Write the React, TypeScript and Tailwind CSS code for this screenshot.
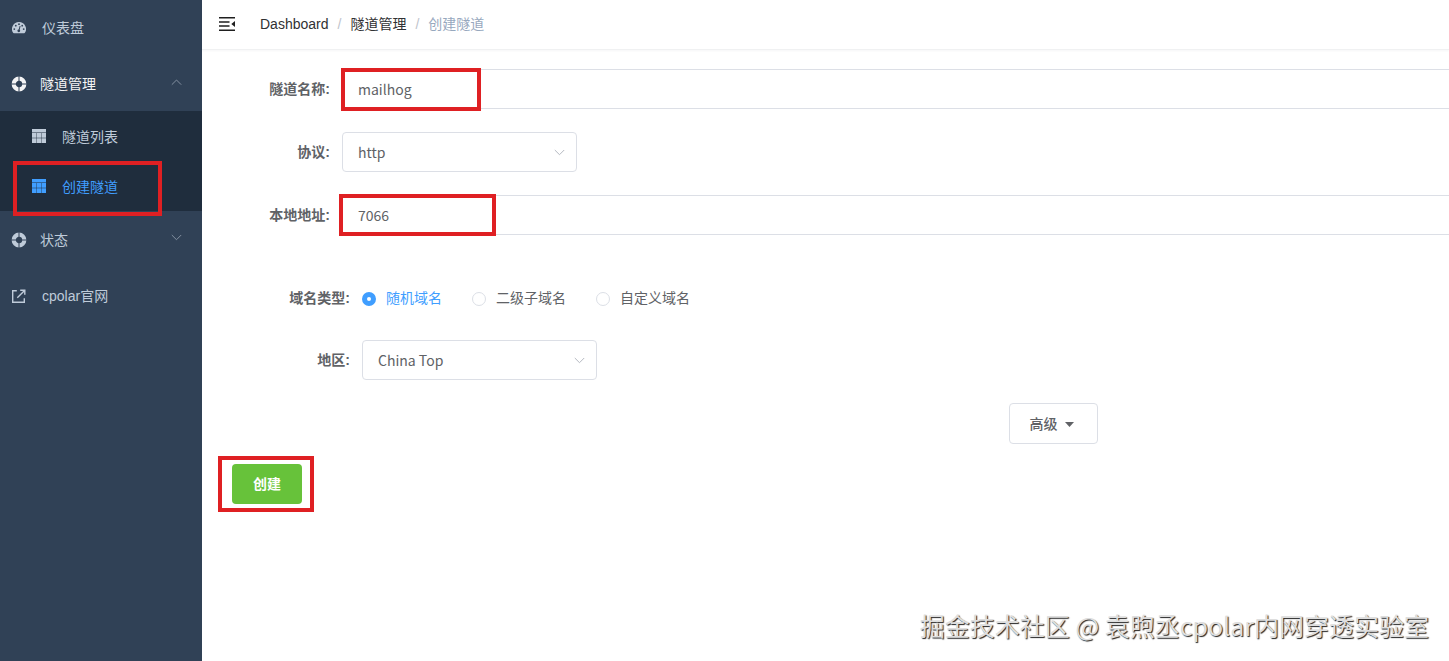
import { useState } from "react";
import type { ReactNode } from "react";

// ===============================
// ICONS
// ===============================
function GaugeIcon() {
  return (
    <svg width="14" height="12" viewBox="0 0 14 12">
      <path d="M7 0a7 7 0 0 0-5.9 10.8c.2.3.4.4.7.4h10.4c.3 0 .5-.1.7-.4A7 7 0 0 0 7 0z" fill="#bfcbd9" />
      <g fill="#304156">
        <circle cx="2.3" cy="7.1" r="0.9" />
        <circle cx="3.8" cy="3.7" r="0.9" />
        <circle cx="7" cy="2.2" r="0.9" />
        <circle cx="10.2" cy="3.7" r="0.9" />
        <circle cx="11.7" cy="7.1" r="0.9" />
        <circle cx="6.8" cy="8.8" r="1.4" />
      </g>
      <path d="M6.9 8.6 8 4.4" stroke="#304156" strokeWidth="1" strokeLinecap="round" />
    </svg>
  );
}

function HelpIcon() {
  return (
    <svg width="16" height="16" viewBox="0 0 16 16" fill="none">
      <circle cx="8" cy="8" r="5.3" stroke="currentColor" strokeWidth="4.2" />
      <path d="M8 0v5M8 11v5M0 8h5M11 8h5" stroke="#304156" strokeWidth="1" />
    </svg>
  );
}

function TableIcon() {
  return (
    <svg width="14" height="14" viewBox="0 0 14 14" fill="currentColor">
      <path d="M0 0h14v3.6H0zM0 4.1h4.4v4.7H0zM4.8 4.1h4.4v4.7H4.8zM9.6 4.1H14v4.7H9.6zM0 9.2h4.4V14H0zM4.8 9.2h4.4V14H4.8zM9.6 9.2H14V14H9.6z" />
    </svg>
  );
}

function LinkIcon() {
  return (
    <svg width="15" height="15" viewBox="0 0 15 15" fill="none" stroke="currentColor" strokeWidth="1.4">
      <path d="M5.8 1.7H1.7v11.6h11.6V9.2M6.3 8.7l7.3-7.3M9.2 1.2h4.6v4.6" />
    </svg>
  );
}

function FoldIcon() {
  return (
    <svg width="16" height="14" viewBox="0 0 16 14" className="mb-px">
      <path d="M0 .8h16M0 4.9h10.5M0 9.1h10.5M0 13.2h16" stroke="#1f1f1f" strokeWidth="1.5" />
      <path d="M16 4v6l-3.7-3z" fill="#1f1f1f" />
    </svg>
  );
}

function Chevron({ up = false, className = "" }: { up?: boolean; className?: string }) {
  return (
    <svg width="11" height="7" viewBox="0 0 11 7" fill="none" stroke="currentColor" className={className}>
      <path d={up ? "M.8 5.7 5.5 1l4.700 4.700" : "M.8 1l4.700 4.700L10.200 1"} />
    </svg>
  );
}

// red frame over the highlighted control
function Mark({ className }: { className: string }) {
  return <span className={`pointer-events-none absolute z-10 border-4 border-[#df2023] ${className}`} />;
}

function FormRow({ label, width, children }: { label: string; width: string; children: ReactNode }) {
  return (
    <div className="flex h-10 items-center">
      <label className={`shrink-0 pr-3 text-right font-bold text-[#606266] ${width}`}>{label}</label>
      {children}
    </div>
  );
}

function SelectBox({ value }: { value: string }) {
  return (
    <div className="flex h-10 w-[235px] items-center justify-between rounded border border-[#dcdfe6] pr-[11px] pl-[15px] font-['Noto_Sans_CJK_SC',sans-serif] text-sm text-[#606266]">
      <span>{value}</span>
      <Chevron className="text-[#b4b8c0]" />
    </div>
  );
}

const domainTypes = ["随机域名", "二级子域名", "自定义域名"];

export default function App() {
  const [name, setName] = useState("mailhog");
  const [address, setAddress] = useState("7066");
  const [domain, setDomain] = useState(domainTypes[0]);

  const inputClass =
    "h-10 w-full rounded-l border border-r-0 border-[#dcdfe6] px-[15px] font-['Noto_Sans_CJK_SC',sans-serif] text-sm text-[#606266] outline-none";

  return (
    <div className="relative flex h-[661px] overflow-hidden bg-white font-['Liberation_Sans','Noto_Sans_CJK_SC',sans-serif] text-sm">
      {/* SIDEBAR */}
      <aside className="w-[202px] shrink-0 bg-[#304156] text-[#bfcbd9]">
        <div className="flex h-14 items-center pl-3">
          <GaugeIcon />
          <span className="ml-4">仪表盘</span>
        </div>
        <div className="flex h-[55px] items-center pr-[20px] pl-[11px] text-[#f4f4f5]">
          <HelpIcon />
          <span className="ml-[13px] flex-1">隧道管理</span>
          <Chevron up className="mb-[3px] text-[#8390a0]" />
        </div>
        <div className="h-[100px] bg-[#1f2d3d]">
          <div className="flex h-[50px] items-center pl-8">
            <TableIcon />
            <span className="ml-4 pt-px">隧道列表</span>
          </div>
          <div className="relative flex h-[50px] items-center pl-8 text-[#409eff]">
            <TableIcon />
            <span className="ml-4 pt-px">创建隧道</span>
            <Mark className="top-0 left-[13px] h-[55px] w-[149px]" />
          </div>
        </div>
        <div className="flex h-[57px] items-center pr-[20px] pl-[11px]">
          <HelpIcon />
          <span className="ml-[13px] flex-1">状态</span>
          <Chevron className="mb-1 text-[#8390a0]" />
        </div>
        <div className="flex h-14 items-center pl-[11px]">
          <LinkIcon />
          <span className="ml-4">cpolar官网</span>
        </div>
      </aside>

      <main className="min-w-0 flex-1">
        {/* NAVBAR */}
        <header className="flex h-[50px] items-center border-b border-[#f0f1f2] pb-px pl-[17px] shadow-[0_1px_2px_rgba(0,21,41,0.04)]">
          <FoldIcon />
          <nav className="ml-[25px] flex items-center text-[#303133]">
            <span>Dashboard</span>
            <span className="mx-[9px] text-[#c0c4cc]">/</span>
            <span>隧道管理</span>
            <span className="mx-[9px] text-[#c0c4cc]">/</span>
            <span className="text-[#97a8be]">创建隧道</span>
          </nav>
        </header>

        {/* TUNNEL FORM */}
        <form className="pt-[19px]">
          <div className="flex flex-col gap-[23px]">
            <FormRow label="隧道名称:" width="w-[140px]">
              <div className="relative flex-1">
                <input className={inputClass} value={name} onChange={(e) => setName(e.target.value)} />
                <Mark className="-top-px -left-px h-[43px] w-[140px]" />
              </div>
            </FormRow>
            <FormRow label="协议:" width="w-[140px]">
              <SelectBox value="http" />
            </FormRow>
            <FormRow label="本地地址:" width="w-[140px]">
              <div className="relative flex-1">
                <input className={inputClass} value={address} onChange={(e) => setAddress(e.target.value)} />
                <Mark className="-top-px -left-[3px] h-[42px] w-[157px]" />
              </div>
            </FormRow>
          </div>

          <div className="mt-[43px] mb-[23px] flex flex-col gap-[22px]">
            <FormRow label="域名类型:" width="w-40">
              <div className="flex gap-[30px]">
                {domainTypes.map((type) => (
                  <button
                    key={type}
                    type="button"
                    onClick={() => setDomain(type)}
                    className={`flex items-center gap-2.5 ${domain === type ? "text-[#409eff]" : "text-[#606266]"}`}
                  >
                    <span
                      className={`mt-0.5 size-3.5 rounded-full bg-white ${
                        domain === type ? "border-5 border-[#409eff]" : "border border-[#dcdfe6]"
                      }`}
                    />
                    {type}
                  </button>
                ))}
              </div>
            </FormRow>
            <FormRow label="地区:" width="w-40">
              <SelectBox value="China Top" />
            </FormRow>
          </div>

          <div className="ml-[807px]">
            <button
              type="button"
              className="flex h-[41px] w-[89px] items-center justify-center gap-[7px] rounded border border-[#dcdfe6] pr-1 font-medium text-[#606266]"
            >
              高级
              <svg width="9" height="5" viewBox="0 0 9 5" fill="currentColor" className="mt-px">
                <path d="M0 0h9L4.500 5z" />
              </svg>
            </button>
          </div>

          <div className="relative mt-5 ml-[30px] w-[70px]">
            <button type="button" className="h-10 w-full rounded bg-[#67c23a] font-bold text-white">
              创建
            </button>
            <Mark className="-top-2 -left-3.5 h-[56px] w-24" />
          </div>
        </form>
      </main>

      {/* WATERMARK */}
      <div className="absolute right-5 bottom-[17px] font-['Noto_Sans_CJK_SC',sans-serif] text-[25px] whitespace-nowrap text-[#dedede] [text-shadow:1px_1px_1px_#222]">
        掘金技术社区 @ 袁煦丞cpolar内网穿透实验室
      </div>
    </div>
  );
}
